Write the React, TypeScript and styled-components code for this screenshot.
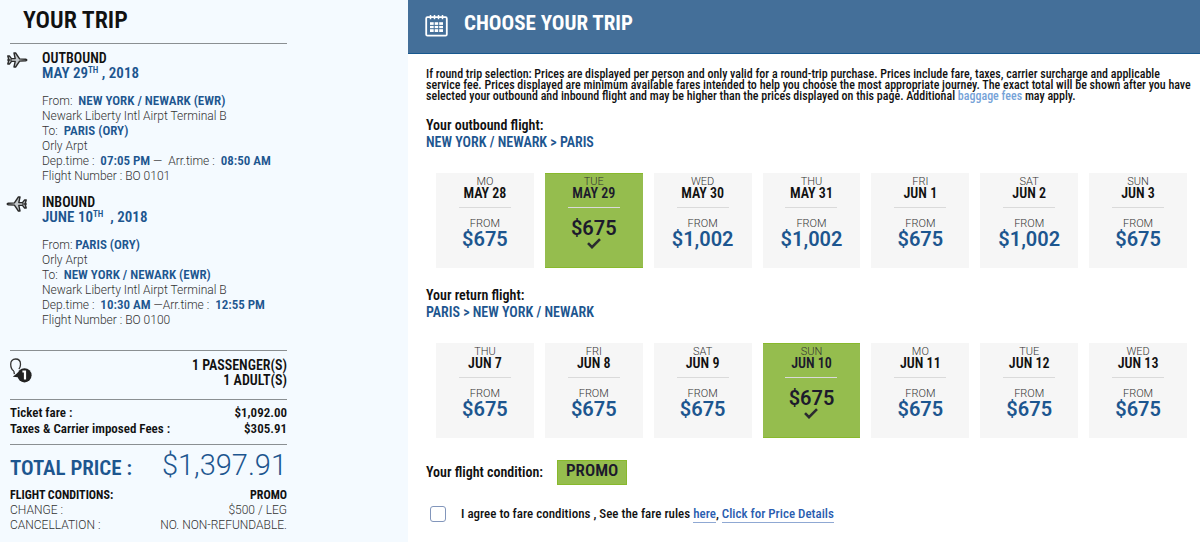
import React, { useState } from "react";
import styled, { createGlobalStyle } from "styled-components";

const narrow = '"Roboto Condensed", Roboto, sans-serif';
const light = 'Roboto, "Open Sans", sans-serif';
const blue = "#1d568f";

const GlobalStyle = createGlobalStyle`
  * { box-sizing: border-box; }
  body { margin: 0; background: #fff; color: #111; font: 600 13px/15px ${narrow}; }
  h1, h2, h3, p, dl, dd, dt { margin: 0; font: inherit; }
  a { color: #2a5db0; text-decoration: none; }
`;

const Page = styled.div`
  display: grid;
  grid-template-columns: 34% minmax(0, 1fr);
  min-height: 100vh;
`;

const Sidebar = styled.aside`
  background: #f4faff;
  padding: 0 121px 8px 10px;
`;

const SidebarTitle = styled.h1`
  && { font-size: 24px; line-height: 28px; padding: 6px 0 9px 13px; }
  border-bottom: 1px solid #8a8f92;
`;

const Itinerary = styled.div`
  padding-bottom: 18px;
`;

const Leg = styled.section`
  display: grid;
  grid-template-columns: 32px 1fr;
  padding: 7px 0 4px;
  white-space: nowrap;
  & > svg { margin: 0 0 0 -4px; }
`;

const LegTitle = styled.h2`
  && { font-size: 14px; line-height: 15px; }
`;

const LegDate = styled.p`
  && { font-size: 15px; line-height: 14px; }
  color: ${blue};
  margin-bottom: 14px;
  sup { font-size: 9px; line-height: 0; vertical-align: 5px; }
`;

const Detail = styled.p`
  && { font: 300 12px/15px ${light}; }
  color: #333;
  height: 15px;
  white-space: pre;
  b { font: 600 13px/12px ${narrow}; color: ${blue}; }
`;

const Block = styled.section<{ $pad: string }>`
  border-top: 1px solid #8a8f92;
  padding: ${(p) => p.$pad};
`;

const Passengers = styled.div`
  display: flex;
  justify-content: space-between;
  text-align: right;
  font-size: 14px;
  line-height: 15px;
`;

const PriceRow = styled.div<{ $kind?: "strong" | "light" }>`
  display: flex;
  justify-content: space-between;
  line-height: 16px;
  white-space: nowrap;
  ${(p) => p.$kind === "strong" && "font-size: 12px; font-weight: 700;"}
  ${(p) => p.$kind === "light" && `font: 300 12px/15px ${light}; color: #333;`}
`;

const Total = styled.dl`
  display: flex;
  justify-content: space-between;
  align-items: baseline;
  color: ${blue};
  line-height: 37px;
  white-space: nowrap;
  dt { font-size: 21px; font-weight: 600; }
  dd { font: 300 29px/37px ${light}; }
`;

const Header = styled.header`
  display: flex;
  align-items: center;
  gap: 16px;
  height: 54px;
  padding: 0 17px 7px;
  background: #446f99;
  border-bottom: 1px solid #17588f;
  color: #fff;
  h2 { font-size: 21px; line-height: 28px; font-weight: 700; }
  svg { margin-top: 4px; }
`;

const Notice = styled.p`
  && { font-size: 12px; line-height: 11px; font-weight: 500; }
  padding: 15px 0 0 18px;
  white-space: nowrap;
  a { color: #76a3d8; }
`;

const Flight = styled.section<{ $top: number }>`
  padding: ${(p) => p.$top}px 13px 0 18px;
`;

const FlightLabel = styled.h3`
  && { font-size: 14px; line-height: 18px; }
`;

const Route = styled.p`
  && { font-size: 14px; line-height: 16px; }
  color: ${blue};
`;

const Days = styled.div`
  display: grid;
  grid-template-columns: repeat(7, 1fr);
  gap: 11px;
  padding: 23px 0 0 10px;
`;

const Day = styled.button<{ $selected: boolean }>`
  display: flex;
  flex-direction: column;
  align-items: center;
  height: 95px;
  padding: 2px 0 0;
  border: 0;
  border-top: 1px solid ${(p) => (p.$selected ? "#88b92c" : "#f6f6f6")};
  border-bottom: 1px solid ${(p) => (p.$selected ? "#88b92c" : "#f6f6f6")};
  background: ${(p) => (p.$selected ? "#95bd4e" : "#f6f6f6")};
  color: ${(p) => (p.$selected ? "#1c1a2c" : "#111")};
  font-family: ${narrow};
  cursor: pointer;
`;

const Thin = styled.span`
  font: 300 11px/11px ${light};
  color: #333;
`;

const DateText = styled.span`
  font-size: 14px;
  line-height: 12px;
  font-weight: 600;
`;

const Divider = styled.span`
  width: 52px;
  height: 1px;
  margin: 8px 0 10px;
  background: #dadada;
`;

const Price = styled.span<{ $selected: boolean }>`
  font: 600 20px/20px ${light};
  color: ${(p) => (p.$selected ? "#1c1a2c" : blue)};
`;

const Condition = styled.div`
  display: flex;
  align-items: center;
  gap: 14px;
  padding: 22px 18px 0;
  font-size: 14px;
`;

const Promo = styled.span`
  background: #95bd4e;
  border: 1px solid #88b92c;
  padding: 0 8px 5px;
  font-size: 17px;
  line-height: 18px;
  color: #1c1a2c;
`;

const Agreement = styled.div`
  display: flex;
  align-items: center;
  gap: 15px;
  padding: 19px 22px 0;
  font-weight: 500;
  a { border-bottom: 1px solid #8fa8d3; padding-bottom: 1px; }
`;

const Checkbox = styled.input`
  appearance: none;
  width: 16px;
  height: 16px;
  margin: 2px 0 0;
  border: 1px solid #8296bb;
  border-radius: 3px;
  background: #fff;
  &:checked { background: ${blue}; }
`;

const Plane = ({ back }: { back?: boolean }) => (
  <svg width="22" height="18" viewBox="0 0 22 18" fill="#c4c8cb" stroke="#2a2a2a" strokeWidth="1.4" strokeLinejoin="round" aria-hidden="true">
    <g transform={back ? "translate(22 0) scale(-1 1)" : undefined}>
      <path d="M1.800 5h1.600L5.500 7.600h3.700L8 2h1.600L13.600 7.900l6 .3q1.200.2 1.200.8t-1.200.8l-6 .3L9.600 16H8l1.200-5.600H5.500L3.400 13H1.800L2.900 9z" />
      <path d="M1 9h5" strokeWidth="1.200" />
    </g>
  </svg>
);

const PassengerIcon = () => (
  <svg width="22" height="26" viewBox="0 0 22 26" aria-hidden="true">
    <path d="M3.800 13C1.600 11.500.7 8.800.7 6.200.7 3 2.600 1 5.600 1s4.900 2 4.900 5.200c0 2.300-.7 3.800-1.600 5M3.800 13l.6 3.200" fill="none" stroke="#333" strokeWidth="1.300" />
    <path d="M2.800 18.800L8 14.600v4.600z" fill="#222" />
    <circle cx="14.500" cy="17.300" r="7.100" fill="#222" />
    <path d="M12.400 12.600h3.700v9h-2.200v-7h-1.500z" fill="#fff" />
  </svg>
);

const CalendarIcon = () => (
  <svg width="23" height="23" viewBox="0 0 23 23" fill="none" stroke="#fff" aria-hidden="true">
    <rect x="1.200" y="3.200" width="20.600" height="18.400" rx="1.200" strokeWidth="1.800" />
    <path d="M5.500 1v4.200M9.500 1v4.200M13.500 1v4.200M17.500 1v4.200" strokeWidth="1.500" />
    <path d="M5 8.200h13v9.800H5z" fill="#fff" stroke="none" />
    <path d="M5 11.400h13M5 14.700h13M9.200 8v10M13.700 8v10" stroke="#446f99" strokeWidth="1" />
  </svg>
);

const Check = () => (
  <svg width="14" height="11" viewBox="0 0 14 11" fill="none" stroke="#2b2b30" strokeWidth="2.600" aria-hidden="true">
    <path d="M1 5.200l4 4L13 1.200" />
  </svg>
);

type DayInfo = [string, string, string];
const outbound: DayInfo[] = [
  ["MO", "MAY 28", "$675"], ["TUE", "MAY 29", "$675"], ["WED", "MAY 30", "$1,002"], ["THU", "MAY 31", "$1,002"],
  ["FRI", "JUN 1", "$675"], ["SAT", "JUN 2", "$1,002"], ["SUN", "JUN 3", "$675"],
];
const inbound: DayInfo[] = [
  ["THU", "JUN 7", "$675"], ["FRI", "JUN 8", "$675"], ["SAT", "JUN 9", "$675"], ["SUN", "JUN 10", "$675"],
  ["MO", "JUN 11", "$675"], ["TUE", "JUN 12", "$675"], ["WED", "JUN 13", "$675"],
];

const DayPicker = ({ days, initial }: { days: DayInfo[]; initial: number }) => {
  const [selected, setSelected] = useState(initial);
  return (
    <Days>
      {days.map(([day, date, price], i) => (
        <Day key={date} type="button" $selected={i === selected} aria-pressed={i === selected} onClick={() => setSelected(i)}>
          <Thin>{day}</Thin>
          <DateText>{date}</DateText>
          <Divider />
          {i !== selected && <Thin>FROM</Thin>}
          <Price $selected={i === selected}>{price}</Price>
          {i === selected && <Check />}
        </Day>
      ))}
    </Days>
  );
};

export default function App() {
  return (
    <Page>
      <GlobalStyle />
      <Sidebar>
        <SidebarTitle>YOUR TRIP</SidebarTitle>
        <Itinerary>
          <Leg>
            <Plane />
            <div>
              <LegTitle>OUTBOUND</LegTitle>
              <LegDate>MAY 29<sup>TH</sup> , 2018</LegDate>
              <Detail>From:  <b>NEW YORK / NEWARK (EWR)</b></Detail>
              <Detail>Newark Liberty Intl Airpt Terminal B</Detail>
              <Detail>To:  <b>PARIS (ORY)</b></Detail>
              <Detail>Orly Arpt</Detail>
              <Detail>Dep.time : <b> 07:05 PM</b> —  Arr.time : <b> 08:50 AM</b></Detail>
              <Detail>Flight Number : BO 0101</Detail>
            </div>
          </Leg>
          <Leg>
            <Plane back />
            <div>
              <LegTitle>INBOUND</LegTitle>
              <LegDate>JUNE 10<sup>TH</sup> &nbsp;, 2018</LegDate>
              <Detail>From: <b>PARIS (ORY)</b></Detail>
              <Detail>Orly Arpt</Detail>
              <Detail>To:  <b>NEW YORK / NEWARK (EWR)</b></Detail>
              <Detail>Newark Liberty Intl Airpt Terminal B</Detail>
              <Detail>Dep.time : <b> 10:30 AM</b> —Arr.time : <b> 12:55 PM</b></Detail>
              <Detail>Flight Number : BO 0100</Detail>
            </div>
          </Leg>
        </Itinerary>
        <Block $pad="7px 0 11px">
          <Passengers>
            <PassengerIcon />
            <div>1 PASSENGER(S)<br />1 ADULT(S)</div>
          </Passengers>
        </Block>
        <Block $pad="5px 0 7px">
          <PriceRow><span>Ticket fare :</span><span>$1,092.00</span></PriceRow>
          <PriceRow><span>Taxes &amp; Carrier imposed Fees :</span><span>$305.91</span></PriceRow>
        </Block>
        <Block $pad="2px 0 0">
          <Total><dt>TOTAL PRICE :</dt><dd>$1,397.91</dd></Total>
          <PriceRow $kind="strong"><span>FLIGHT CONDITIONS:</span><span>PROMO</span></PriceRow>
          <PriceRow $kind="light"><span>CHANGE :</span><span>$500 / LEG</span></PriceRow>
          <PriceRow $kind="light"><span>CANCELLATION :</span><span>NO. NON-REFUNDABLE.</span></PriceRow>
        </Block>
      </Sidebar>
      <main>
        <Header>
          <CalendarIcon />
          <h2>CHOOSE YOUR TRIP</h2>
        </Header>
        <Notice>
          If round trip selection: Prices are displayed per person and only valid for a round-trip purchase. Prices include fare, taxes, carrier surcharge and applicable<br />
          service fee. Prices displayed are minimum available fares intended to help you choose the most appropriate journey. The exact total will be shown after you have<br />
          selected your outbound and inbound flight and may be higher than the prices displayed on this page. Additional <a href="#baggage">baggage fees</a> may apply.
        </Notice>
        <Flight $top={14}>
          <FlightLabel>Your outbound flight:</FlightLabel>
          <Route>NEW YORK / NEWARK &gt; PARIS</Route>
          <DayPicker days={outbound} initial={1} />
        </Flight>
        <Flight $top={18}>
          <FlightLabel>Your return flight:</FlightLabel>
          <Route>PARIS &gt; NEW YORK / NEWARK</Route>
          <DayPicker days={inbound} initial={3} />
        </Flight>
        <Condition>Your flight condition:<Promo>PROMO</Promo></Condition>
        <Agreement>
          <Checkbox type="checkbox" id="agree" />
          <div><label htmlFor="agree">I agree to fare conditions , See the fare rules</label> <a href="#rules">here</a>, <a href="#details">Click for Price Details</a></div>
        </Agreement>
      </main>
    </Page>
  );
}
